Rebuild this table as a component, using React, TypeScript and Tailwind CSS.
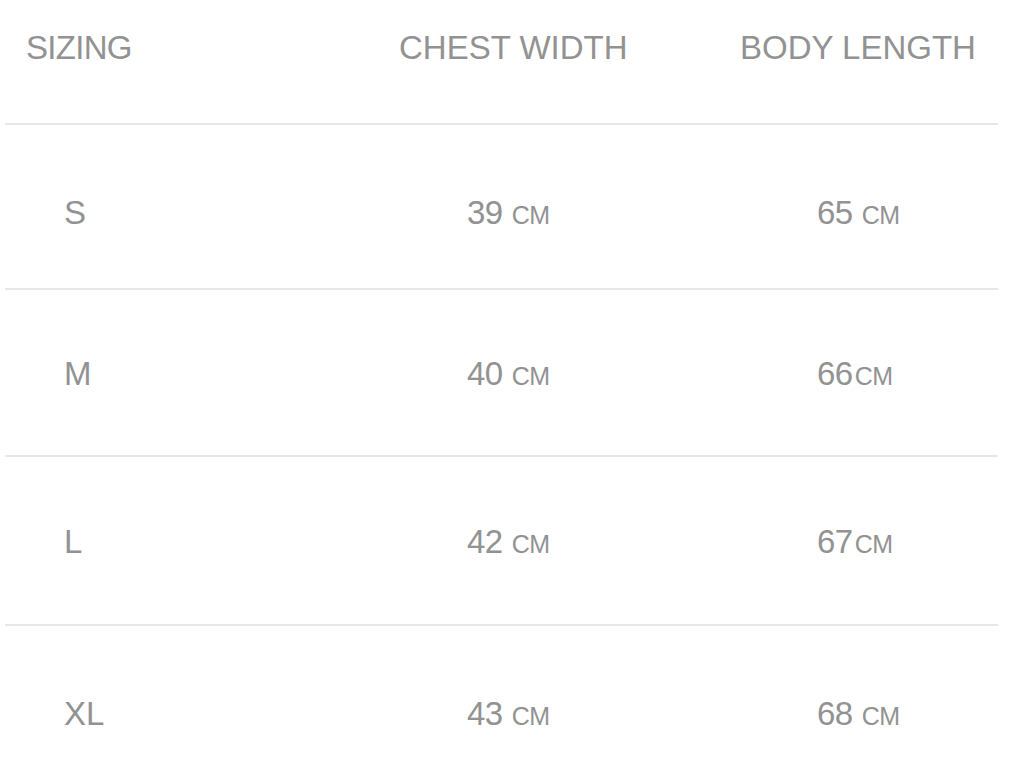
import React from "react";

const rows = [
  { size: "S", chest: "39", body: "65", bodyGap: "ml-[9px]", h: "h-[165px]", pt: "pt-[12px]" },
  { size: "M", chest: "40", body: "66", bodyGap: "ml-[2px]", h: "h-[167px]", pt: "pt-[2px]" },
  { size: "L", chest: "42", body: "67", bodyGap: "ml-[2px]", h: "h-[169px]", pt: "pt-[2px]" },
  { size: "XL", chest: "43", body: "68", bodyGap: "ml-[9px]", h: "h-[176px]", pt: "pt-[0px]" },
];

function Val({ n, gap }: { n: string; gap: string }) {
  return (
    <span className="inline-flex items-baseline">
      <span className="text-[33px] tracking-[-0.5px]">{n}</span>
      <span className={`${gap} text-[25px] tracking-[-0.5px]`}>CM</span>
    </span>
  );
}

export default function App() {
  return (
    <div
      className="w-[1024px] h-[778px] overflow-hidden bg-white text-[#929292]"
      style={{ fontFamily: '"Liberation Sans", Arial, sans-serif' }}
    >
      <div className="ml-[5px] w-[993px]">
        <div className="flex h-[123px] items-start pt-[31px] text-[33px] leading-[33px]">
          <div className="w-[394px] pl-[21px] tracking-[-0.7px]">SIZING</div>
          <div className="w-[341px]">CHEST WIDTH</div>
          <div>BODY LENGTH</div>
        </div>
        {rows.map((r) => (
          <div
            key={r.size}
            className={`flex ${r.h} ${r.pt} items-center border-t-2 border-[#e7e7e7]`}
          >
            <div className="w-[462px] pl-[59px] text-[33px] leading-none">{r.size}</div>
            <div className="w-[350px] leading-none">
              <Val n={r.chest} gap="ml-[9px]" />
            </div>
            <div className="leading-none">
              <Val n={r.body} gap={r.bodyGap} />
            </div>
          </div>
        ))}
      </div>
    </div>
  );
}
